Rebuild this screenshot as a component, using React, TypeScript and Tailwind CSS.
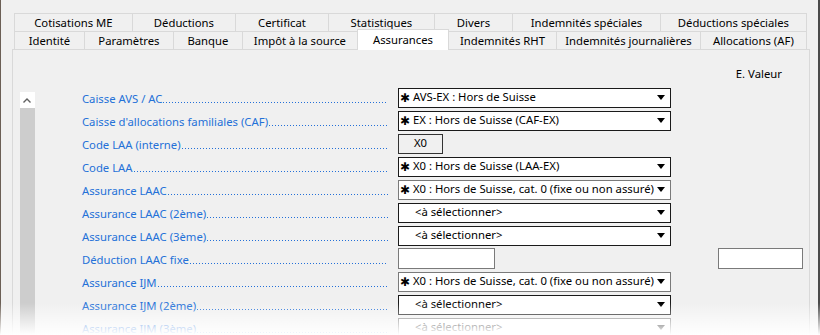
import React from 'react'

const font = { fontFamily: '"Noto Sans", "DejaVu Sans", sans-serif' }

const row1 = [
  ['Cotisations ME', 119],
  ['Déductions', 103],
  ['Certificat', 93],
  ['Statistiques', 106],
  ['Divers', 78],
  ['Indemnités spéciales', 148],
  ['Déductions spéciales', 146],
] as const

const row2 = [
  ['Identité', 71],
  ['Paramètres', 89],
  ['Banque', 69],
  ['Impôt à la source', 115],
  ['Assurances', 91],
  ['Indemnités RHT', 108],
  ['Indemnités journalières', 144],
  ['Allocations (AF)', 106],
] as const

type Field =
  | { kind: 'combo'; value: string; star?: boolean; dark?: boolean }
  | { kind: 'code'; value: string }
  | { kind: 'input'; extra?: boolean }

const rows: { label: string; field: Field }[] = [
  { label: 'Caisse AVS / AC', field: { kind: 'combo', value: 'AVS-EX : Hors de Suisse', star: true, dark: true } },
  { label: "Caisse d'allocations familiales (CAF)", field: { kind: 'combo', value: 'EX : Hors de Suisse (CAF-EX)', star: true, dark: true } },
  { label: 'Code LAA (interne)', field: { kind: 'code', value: 'X0' } },
  { label: 'Code LAA', field: { kind: 'combo', value: 'X0 : Hors de Suisse (LAA-EX)', star: true, dark: true } },
  { label: 'Assurance LAAC', field: { kind: 'combo', value: 'X0 : Hors de Suisse, cat. 0 (fixe ou non assuré)', star: true } },
  { label: 'Assurance LAAC (2ème)', field: { kind: 'combo', value: '<à sélectionner>', dark: true } },
  { label: 'Assurance LAAC (3ème)', field: { kind: 'combo', value: '<à sélectionner>', dark: true } },
  { label: 'Déduction LAAC fixe', field: { kind: 'input', extra: true } },
  { label: 'Assurance IJM', field: { kind: 'combo', value: 'X0 : Hors de Suisse, cat. 0 (fixe ou non assuré)', star: true } },
  { label: 'Assurance IJM (2ème)', field: { kind: 'combo', value: '<à sélectionner>', dark: true } },
  { label: 'Assurance IJM (3ème)', field: { kind: 'combo', value: '<à sélectionner>' } },
]

function Arrow() {
  return (
    <svg width="8" height="5" viewBox="0 0 8 5" className="shrink-0">
      <path d="M0 0 H8 L4 5 Z" fill="#000" />
    </svg>
  )
}

function Control({ field }: { field: Field }) {
  if (field.kind === 'code') {
    return (
      <div className="w-[45px] h-[20px] border border-[#333] bg-[#f0f0f0] flex items-center justify-center text-[11.3px] text-black">
        {field.value}
      </div>
    )
  }
  if (field.kind === 'input') {
    return <div className="w-[97px] h-[21px] border border-[#7a7a7a] bg-white" />
  }
  return (
    <div
      className={`w-[273px] h-[20px] border bg-white flex items-center pr-[5px] text-[11.3px] text-black ${
        field.dark ? 'border-[#1a1a1a]' : 'border-[#7a7a7a]'
      }`}
    >
      {field.star ? (
        <span
          className="w-[14px] shrink-0 pl-[1px] text-[12px] font-bold leading-none"
          style={{ fontFamily: '"DejaVu Sans", sans-serif' }}
        >
          ✱
        </span>
      ) : (
        <span className="w-[16px] shrink-0" />
      )}
      <span className="flex-1 whitespace-nowrap">{field.value}</span>
      <Arrow />
    </div>
  )
}

export default function App() {
  return (
    <div className="relative w-[820px] h-[335px] overflow-hidden bg-[#f0f0f0] flex" style={font}>
      <div className="w-[1px] bg-[#6b5f55]" />
      <div className="flex-1 flex flex-col">
        {/* tab strip */}
        <div className="pl-[13px] pt-[13px] flex flex-col text-[11.3px] text-black">
          <div className="flex h-[18px]">
            {row1.map(([t, w], i) => (
              <div
                key={t}
                className={`h-full pt-[1px] border-t border-r border-[#d9d9d9] flex items-center justify-center whitespace-nowrap ${
                  i === 0 ? 'border-l' : ''
                }`}
                style={{ width: w }}
              >
                {t}
              </div>
            ))}
          </div>
          <div className="flex h-[18px] items-end">
            {row2.map(([t, w], i) =>
              t === 'Assurances' ? (
                <div
                  key={t}
                  className="h-[21px] -mb-[1px] -ml-[1px] bg-white border-t border-l border-r border-[#d9d9d9] relative z-10 flex items-center justify-center"
                  style={{ width: w + 1 }}
                >
                  {t}
                </div>
              ) : (
                <div
                  key={t}
                  className={`h-full pt-[1px] border-t border-r border-[#d9d9d9] flex items-center justify-center whitespace-nowrap ${
                    i === 0 ? 'border-l' : ''
                  }`}
                  style={{ width: w }}
                >
                  {t}
                </div>
              )
            )}
          </div>
        </div>

        {/* panel */}
        <div className="ml-[11px] w-[798px] flex-1 border border-b-0 border-[#d9d9d9] flex flex-col">
          <div className="h-[36px] flex items-center justify-end pr-[27px] pt-[12px] text-[11.3px] text-black">
            E. Valeur
          </div>
          <div className="flex flex-1">
            <div className="ml-[7px] w-[15px] mt-[6px] flex flex-col">
              <div className="h-[16px] bg-white flex items-center justify-center">
                <svg width="8" height="5" viewBox="0 0 8 5">
                  <path d="M0.5 4.5 L4 1 L7.5 4.5" stroke="#606060" strokeWidth="1.4" fill="none" />
                </svg>
              </div>
              <div className="flex-1 bg-[#cdcdcd]" />
            </div>
            <div className="ml-[47px] flex flex-col">
              {rows.map((r) => (
                <div key={r.label} className="h-[23px] flex items-center">
                  <div className="w-[306px] pt-[2px] flex items-end text-[11.3px] leading-[16px] text-[#2470d8] whitespace-nowrap">
                    <span>{r.label}</span>
                    <div className="flex-1 ml-[1px] mb-[4px] h-[1px] bg-[linear-gradient(to_right,#2470d8_1px,transparent_1px)] bg-[length:3px_1px] bg-repeat-x" />
                  </div>
                  <div className="ml-[10px] w-[273px]">
                    <Control field={r.field} />
                  </div>
                  {r.field.kind === 'input' && r.field.extra ? (
                    <div className="ml-[47px] w-[85px] h-[21px] border border-[#7a7a7a] bg-white" />
                  ) : null}
                </div>
              ))}
            </div>
          </div>
        </div>
      </div>
      <div className="w-[9px] bg-[#f0f0f0]" />
      <div className="w-[2px] bg-[#4a4a4a]" />
      <div className="absolute left-0 right-0 bottom-0 h-[32px] bg-gradient-to-b from-transparent to-white pointer-events-none" />
    </div>
  )
}
